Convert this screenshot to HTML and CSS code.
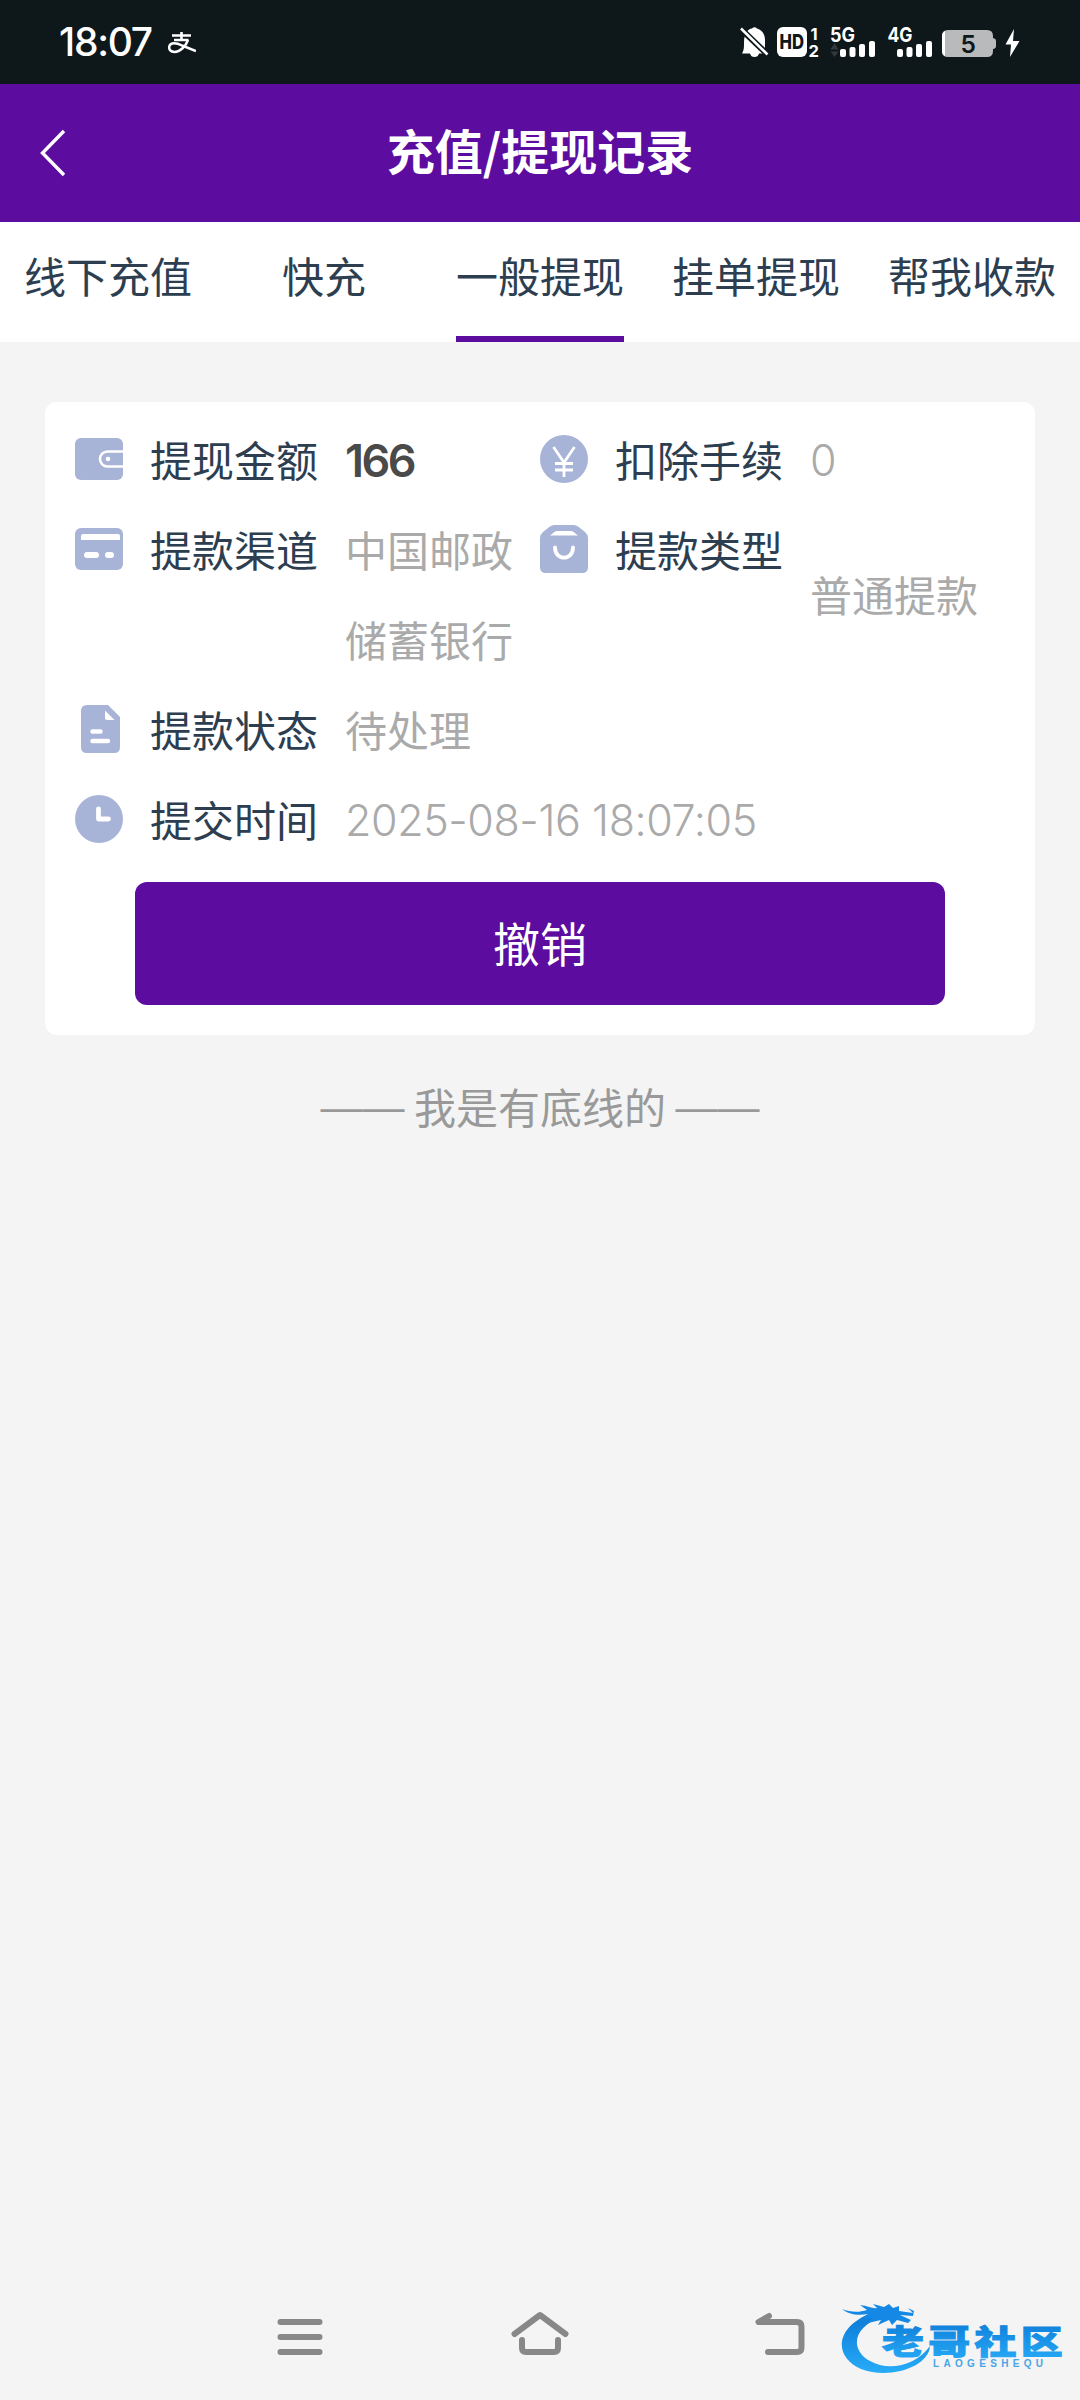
FILE: index.html
```
<!DOCTYPE html>
<html lang="zh-CN">
<head>
<meta charset="utf-8">
<title>充值/提现记录</title>
<link rel="stylesheet" href="styles.css">
</head>
<body>
<div class="screen">
  <div class="status-bar">
    <span class="clock">18:07</span>
    <svg class="alipay" width="28" height="22" viewBox="0 0 28 22" fill="none" stroke="#fff">
      <path d="M13.500 0V8M4 3.500H23M6 8H20.500" stroke-width="2.600"/>
      <path d="M20 8C18 14 12 20 6.500 20C2.500 20 1 17.500 1.200 15C2 9.500 9 11 14 13.500L28 19" stroke-width="2.500"/>
    </svg>
    <svg class="status-icons" width="282" height="60" viewBox="738 13 282 60">
      <path fill="#fff" d="M742 53.500C744 50 744 48 744 43C744 33 748 29 752 28.500Q754.500 26 757 28.500C762 30 765 34 765 40V53.500H759Q758 57 754.500 57Q751 57 750 53.500Z"/>
      <path stroke="#0e171a" stroke-width="6" d="M742 30L767 54"/>
      <path stroke="#fff" stroke-width="2.600" d="M741 28.500L767.500 54.500"/>
      <rect x="777" y="27" width="30" height="30" rx="6" fill="#fff"/>
      <text class="hd" x="779.500" y="48.800" textLength="24.500" lengthAdjust="spacingAndGlyphs">HD</text>
      <text class="net" x="810.500" y="39.500" font-size="16.500">1</text>
      <text class="net" x="808.500" y="57" font-size="16.500">2</text>
      <text class="net" x="830" y="41.800" font-size="20" textLength="25" lengthAdjust="spacingAndGlyphs">5G</text>
      <path fill="#34393b" d="M830.500 49.500L834.500 43L838.500 49.500ZM830.500 51.500L834.500 57L838.500 51.500Z"/>
      <g fill="#fff">
        <rect x="840" y="49" width="6" height="8" rx="2"/><rect x="849.500" y="47" width="6" height="10" rx="2"/>
        <rect x="859" y="44" width="6" height="13" rx="2"/><rect x="869" y="41" width="6" height="16" rx="2"/>
        <rect x="897" y="49" width="6" height="8" rx="2"/><rect x="906.500" y="47" width="6" height="10" rx="2"/>
        <rect x="916" y="44" width="6" height="13" rx="2"/><rect x="926" y="41" width="6" height="16" rx="2"/>
      </g>
      <text class="net" x="887.500" y="41.800" font-size="20" textLength="25" lengthAdjust="spacingAndGlyphs">4G</text>
      <path fill="#b9babc" d="M948 30H987Q993 30 993 36V38Q996 38.500 996 41V46Q996 48.500 993 49V51Q993 57 987 57H948Q942 57 942 51V36Q942 30 948 30Z"/>
      <path fill="#fff" d="M945 31V56Q942 54.500 942 51V36Q942 32.500 945 31Z"/>
      <text class="level" x="960.500" y="52.800">5</text>
      <path fill="#fff" d="M1014 29L1005.500 44.500H1011L1010 57L1019.500 41H1013Z"/>
    </svg>
  </div>

  <header class="nav-bar">
    <svg class="back" width="26" height="48" viewBox="0 0 26 48" fill="none" stroke="#fff" stroke-width="3.400">
      <path d="M24 2L2.500 24L24 46"/>
    </svg>
    <h1 class="title">充值/提现记录</h1>
  </header>

  <nav class="tabs">
    <span class="tab">线下充值</span>
    <span class="tab">快充</span>
    <span class="tab tab-active">一般提现</span>
    <span class="tab">挂单提现</span>
    <span class="tab">帮我收款</span>
  </nav>

  <main class="content">
    <section class="card">
      <div class="fields">
        <div class="field">
          <svg class="icon" viewBox="0 0 48 48"><rect y="3" width="48" height="42" rx="6" fill="#a7b3d7"/><path d="M48 16.500H32.500a7.500 7.500 0 0 0 0 15H48" fill="none" stroke="#fff" stroke-width="2.600"/><circle cx="33" cy="24" r="2.300" fill="#fff"/></svg>
          <span class="label">提现金额</span>
          <span class="value number amount">166</span>
        </div>
        <div class="field">
          <svg class="icon" viewBox="0 0 48 48"><circle cx="24" cy="24" r="24" fill="#a7b3d7"/><path d="M13.500 12L24 27.500L34.500 12M24 27V42M15 28.500H33M15 35H33" fill="none" stroke="#fff" stroke-width="2.800"/></svg>
          <span class="label">扣除手续</span>
          <span class="value number">0</span>
        </div>
        <div class="field">
          <svg class="icon" viewBox="0 0 48 48"><rect y="3" width="48" height="42" rx="6" fill="#a7b3d7"/><path d="M6 15V11Q6 9 8 9H43Q45 9 45 11V15Z" fill="#fff"/><path d="M12 30H21M33 30H36" stroke="#fff" stroke-width="6" stroke-linecap="round"/></svg>
          <span class="label">提款渠道</span>
          <span class="value">中国邮政储蓄银行</span>
        </div>
        <div class="field">
          <svg class="icon" viewBox="0 0 48 48"><path d="M14 0H34Q36 0 38 1.500L45 7Q48 9.500 48 13V42Q48 48 42 48H6Q0 48 0 42V13Q0 9.500 3 7L10 1.500Q12 0 14 0Z" fill="#a7b3d7"/><path d="M10 10.500L15 6.500Q16 6 17 6H31Q32 6 33 6.500L38 10.500Z" fill="#fff"/><path d="M15 22.500C15 36 33 36 33 22.500" fill="none" stroke="#fff" stroke-width="3.800" stroke-linecap="round"/></svg>
          <span class="label">提款类型</span>
          <span class="value value-middle">普通提款</span>
        </div>
        <div class="field field-wide">
          <svg class="icon" viewBox="0 0 48 48"><path d="M12 0H33L45 12V42Q45 48 39 48H12Q6 48 6 42V6Q6 0 12 0Z" fill="#a7b3d7"/><path d="M30 5.500L39.500 15H32Q30 15 30 13Z" fill="#fff"/><path d="M17.500 26.500H25.500M17.500 36H33" stroke="#fff" stroke-width="4.400" stroke-linecap="round"/></svg>
          <span class="label">提款状态</span>
          <span class="value">待处理</span>
        </div>
        <div class="field field-wide">
          <svg class="icon" viewBox="0 0 48 48"><circle cx="24" cy="24" r="24" fill="#a7b3d7"/><path d="M23.500 14V24H33.500" fill="none" stroke="#fff" stroke-width="4.800" stroke-linecap="round" stroke-linejoin="round"/></svg>
          <span class="label">提交时间</span>
          <span class="value number">2025-08-16 18:07:05</span>
        </div>
      </div>
      <button class="cancel">撤销</button>
    </section>
    <p class="end"><span class="dash">——</span> 我是有底线的 <span class="dash">——</span></p>
  </main>

  <footer class="system-nav">
    <svg width="60" height="48" viewBox="0 0 60 48" fill="none" stroke="#888" stroke-width="6" stroke-linecap="round"><path d="M10.500 12H49.500M10.500 27H49.500M10.500 42H49.500"/></svg>
    <svg width="60" height="48" viewBox="0 0 60 48" fill="none" stroke="#888" stroke-width="6" stroke-linecap="round" stroke-linejoin="round"><path d="M4.500 24L30 5L55.500 24"/><path d="M12 30V38Q12 42 16 42H44Q48 42 48 38V30"/></svg>
    <svg width="60" height="48" viewBox="0 0 60 48" fill="none" stroke="#888" stroke-width="6" stroke-linecap="round" stroke-linejoin="round"><path d="M19 6L8.500 12H47Q51.500 12 51.500 16.500V37.500Q51.500 42 47 42H18"/></svg>
  </footer>

  <svg class="watermark" width="224" height="74" viewBox="840 2302 224 74">
    <defs>
      <linearGradient id="blue" x1="0" y1="0" x2="0" y2="1"><stop offset="0.200" stop-color="#1182dc"/><stop offset="1" stop-color="#27acf8"/></linearGradient>
    </defs>
    <path fill="url(#blue)" d="M872 2313C836 2326 832 2356 861 2369C889 2380 929 2367 930 2346C917 2365 889 2372 870 2361C850 2350 852 2327 882 2317Z"/>
    <path fill="#1488e4" d="M842 2309C850 2312 858 2313 867 2310L860 2305C869 2306 873 2309 877 2308L873 2304L884 2307L889 2304L893 2308L899 2306V2311L913 2313L908 2308L914 2311L913 2316L900 2315L911 2320L908 2323L897 2320L892 2325L889 2320L878 2325L881 2320L868 2323L873 2318L861 2318L868 2314C857 2316 848 2314 842 2309Z"/>
    <text class="brand" transform="translate(882 2353.500) scale(1.270 1)" fill="url(#blue)" stroke="url(#blue)">老哥社区</text>
    <text class="brand-sub" x="933" y="2366.500" textLength="110">LAOGESHEQU</text>
  </svg>
</div>
</body>
</html>
```
FILE: styles.css
```
* {
  box-sizing: border-box;
}

body {
  margin: 0;
  font-family: "Noto Sans CJK SC", sans-serif;
  font-size: 42px;
  color: #2c3e50;
  background: #f4f4f4;
}

.screen {
  position: relative;
  display: flex;
  flex-direction: column;
  width: 1080px;
  height: 2400px;
  overflow: hidden;
}

.status-bar {
  display: flex;
  align-items: center;
  height: 84px;
  padding: 0 60px 0 59px;
  color: #fff;
  background: #0e171a;
}

.clock {
  width: 109px;
  font: 500 39px/84px Inter, sans-serif;
  letter-spacing: -1.3px;
}

.alipay {
  margin-top: 2px;
}

.status-icons {
  margin-left: auto;
  margin-top: 2px;
}

.status-icons text {
  font-family: Inter, sans-serif;
  font-weight: 700;
}

.status-icons .hd {
  font-size: 19.5px;
  font-weight: 800;
  fill: #0e171a;
}

.status-icons .net {
  fill: #fff;
}

.status-icons .level {
  font-size: 24.5px;
  font-weight: 600;
  fill: #0e171a;
}

.nav-bar {
  display: grid;
  grid-template-columns: 66px 1fr 66px;
  align-items: center;
  height: 138px;
  color: #fff;
  background: #5c0c9f;
}

.back {
  margin-left: 40px;
}

.title {
  margin: 0;
  padding-bottom: 8px;
  font-size: 48px;
  font-weight: 700;
  line-height: 130px;
  text-align: center;
}

.tabs {
  display: flex;
  height: 120px;
  background: #fff;
}

.tab {
  flex: 1;
  display: flex;
  flex-direction: column;
  align-items: center;
  line-height: 106px;
}

.tab-active::after {
  content: "";
  width: 168px;
  height: 6px;
  margin-top: 8px;
  background: #5c0c9f;
}

.content {
  padding: 60px 45px 0;
}

.card {
  height: 633px;
  padding: 12px 30px 0;
  border-radius: 12px;
  background: #fff;
}

.fields {
  display: grid;
  grid-template-columns: 1fr 1fr;
}

.field {
  display: flex;
  line-height: 90px;
}

.field-wide {
  grid-column: span 2;
}

.icon {
  flex: none;
  width: 48px;
  height: 48px;
  margin: 21px 27px 0 0;
}

.label {
  flex: none;
  width: 168px;
  margin-right: 27px;
}

.value {
  color: #aaa;
}

.number {
  padding-top: 3px;
  font-family: Inter, sans-serif;
  font-size: 43px;
  font-weight: 350;
  line-height: 87px;
  letter-spacing: -0.4px;
}

.amount {
  color: #4a4a4a;
  font-size: 45px;
  font-weight: 600;
  letter-spacing: -2.5px;
}

.value-middle {
  align-self: center;
}

.cancel {
  display: block;
  width: 810px;
  height: 123px;
  margin: 18px auto 0;
  padding: 0 0 4px;
  border: 0;
  border-radius: 12px;
  font: 400 47px/119px "Noto Sans CJK SC", sans-serif;
  color: #fff;
  background: #5c0c9f;
}

.end {
  margin: 26px 0 0;
  line-height: 90px;
  text-align: center;
  color: #999;
}

.dash {
  font-family: "Liberation Sans", sans-serif;
  line-height: 1;
  vertical-align: 3px;
}

.system-nav {
  display: flex;
  justify-content: space-between;
  margin-top: auto;
  padding: 0 270px 42px;
}

.watermark {
  position: absolute;
  left: 840px;
  top: 2302px;
}

.brand {
  font-size: 33px;
  font-weight: 900;
  letter-spacing: 3.4px;
  stroke-width: 1px;
}

.brand-sub {
  font: 700 10px "Liberation Sans", sans-serif;
  fill: #4aa5e8;
}
```
